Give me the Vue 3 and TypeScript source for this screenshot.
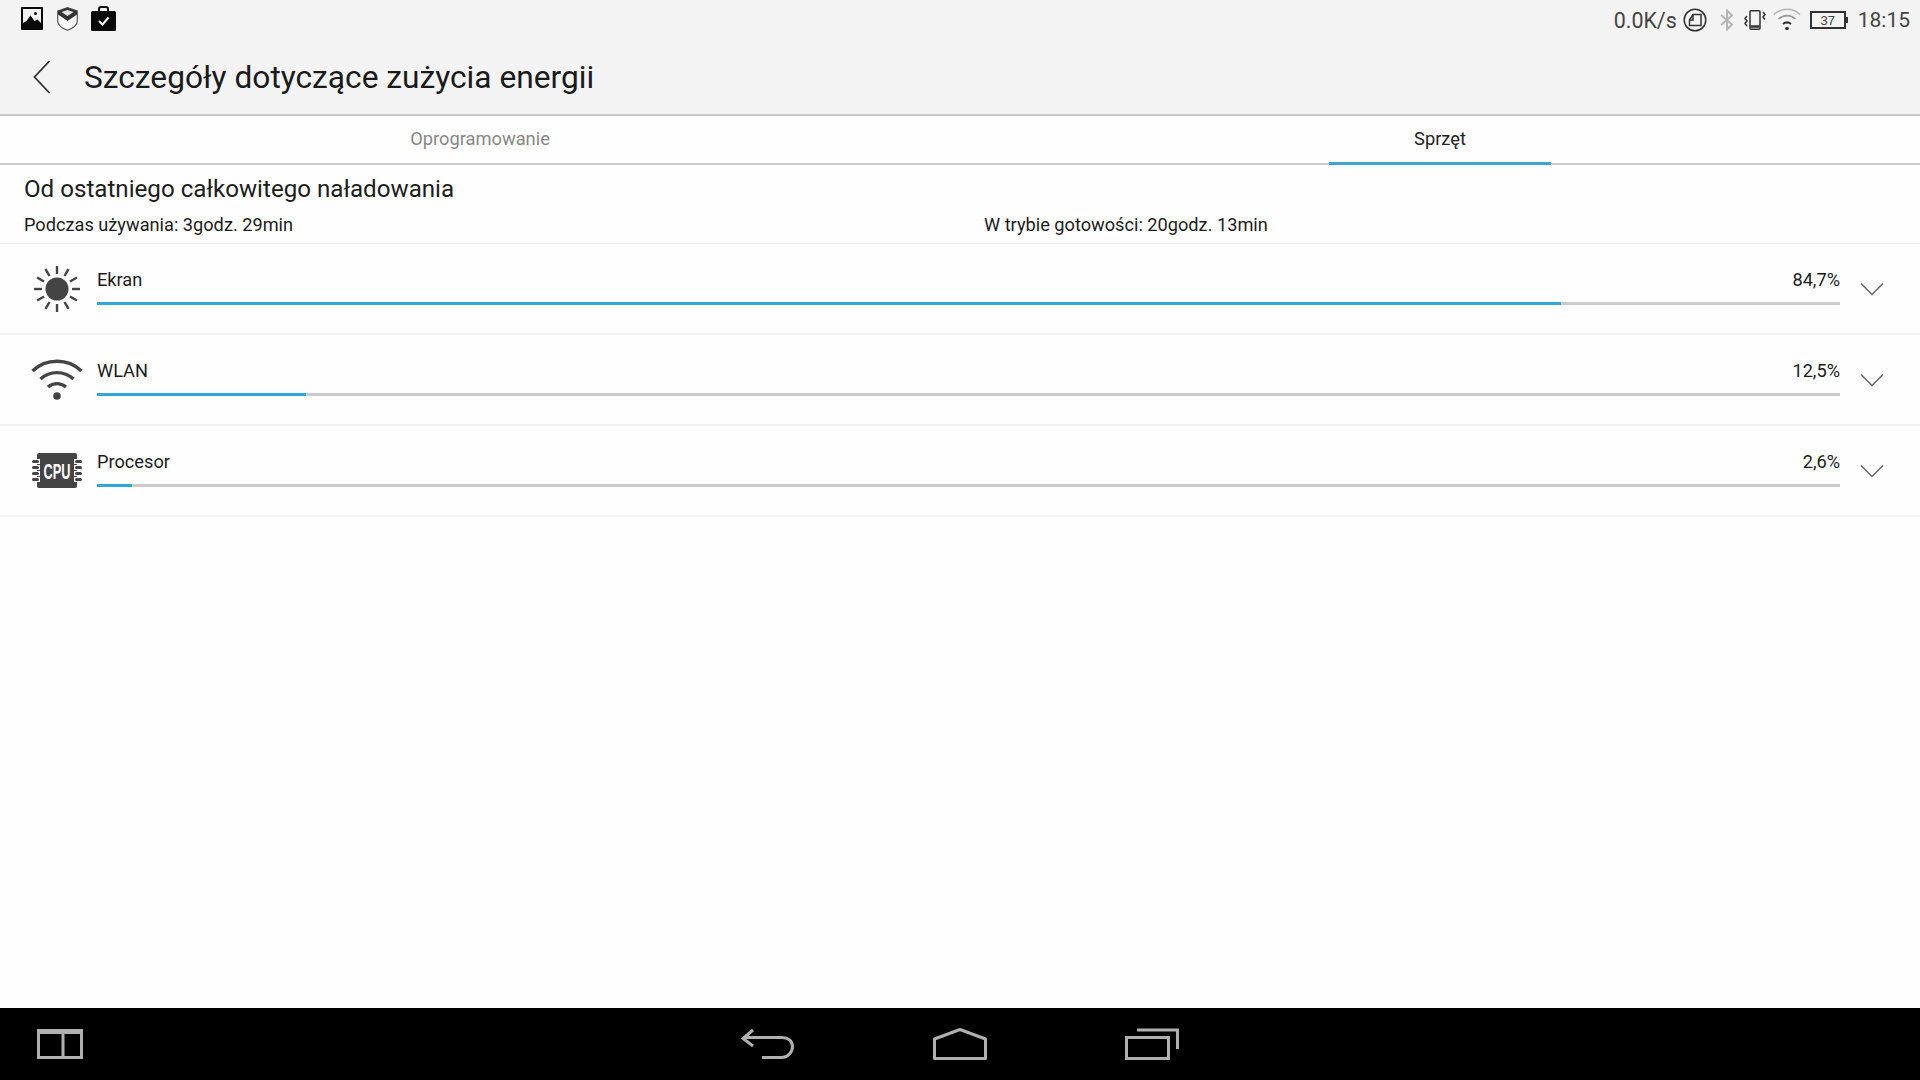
<script setup lang="ts">
interface UsageRow {
  id: 'sun' | 'wifi' | 'cpu'
  label: string
  value: string
  fill: number
}

const rows: UsageRow[] = [
  { id: 'sun', label: 'Ekran', value: '84,7%', fill: 84 },
  { id: 'wifi', label: 'WLAN', value: '12,5%', fill: 12 },
  { id: 'cpu', label: 'Procesor', value: '2,6%', fill: 2 },
]

const rays = [0, 30, 60, 90, 120, 150, 180, 210, 240, 270, 300, 330]
const pins = [7, 13, 19, 25]
</script>

<template>
  <div class="screen">
    <div class="top">
      <div class="status">
        <div class="notif">
          <svg width="22" height="23" viewBox="0 0 22 23">
            <rect width="22" height="23" rx="1" fill="#0a0a0a" />
            <path d="M2 2h18v14l-3.500-3.500-3 1.500-4-5.500-4 5.500L2 16z" fill="#f2f2f2" />
            <circle cx="14.500" cy="6.500" r="1.500" fill="#0a0a0a" />
          </svg>
          <svg class="shield" width="21" height="24" viewBox="0 0 21 24">
            <path d="M.7 4 10.500.7 20.300 4v10c0 4.500-5 7.500-9.800 9.300C5.700 21.500.7 18.500.7 14z" fill="#f8f8f8" stroke="#555" stroke-width="1.200" />
            <path d="M1 4 10.500.8 20 4v3.500L10.500 14 1 7.500z" fill="#333" />
            <path d="M4.500 5 10.500 3l6 2-6 4z" fill="#e4e4e4" />
          </svg>
          <svg width="25" height="25" viewBox="0 0 25 25">
            <path d="M8 6V3a2 2 0 0 1 2-2h5a2 2 0 0 1 2 2v3" fill="none" stroke="#0a0a0a" stroke-width="2" />
            <rect x="0" y="5" width="25" height="20" rx="1.500" fill="#0a0a0a" />
            <path d="M8 15 11.500 18.500 17.500 11.500" fill="none" stroke="#fff" stroke-width="2" />
          </svg>
        </div>
        <div class="tray">
          <span class="speed">0.0K/s</span>
          <svg class="data-ic" width="24" height="24" viewBox="0 0 24 24" fill="none" stroke="#333" stroke-width="1.500">
            <circle cx="12" cy="12" r="10.800" />
            <path d="M10 6.500h8v11H6.500V12L10 6.500z" />
            <path d="M10 6.500V12H6.500" />
          </svg>
          <svg class="bt-ic" width="14" height="22" viewBox="0 0 14 22" fill="none" stroke="#b4b4b4" stroke-width="2">
            <path d="M1 6l11 9.500L7 20.500V1.500L12 6.500 1 16" />
          </svg>
          <svg class="vib-ic" width="22" height="20" viewBox="0 0 22 20" fill="none" stroke="#333" stroke-width="1.500">
            <rect x="6" y=".8" width="10" height="18.400" rx="1" />
            <path d="M6.500 16.500h9" stroke-width="2.500" />
            <path d="M3 6 1 8.500 3 11 1 13.500 3 16" />
            <path d="M19 2l2 2.500L19 7l2 2.500" />
          </svg>
          <svg class="wifi-ic" width="28" height="24" viewBox="0 0 28 24" fill="none" stroke-width="1.600">
            <path d="M1 7.500C8.500.5 19.500.5 27 7.500" stroke="#b4b4b4" />
            <path d="M5.500 12C10.500 7.500 17.500 7.500 22.500 12" stroke="#999" />
            <path d="M10 17c2.500-2 5.500-2 8 0" stroke="#333" stroke-width="2" />
            <circle cx="14" cy="21.500" r="1.800" fill="#333" />
          </svg>
          <div class="battery"><span>37</span></div>
          <span class="clock">18:15</span>
        </div>
      </div>
      <div class="action">
        <svg class="back" width="18" height="34" viewBox="0 0 18 34" fill="none" stroke="#333" stroke-width="1.800">
          <path d="M16.500 1 1.500 17l15 16" />
        </svg>
        <span class="title">Szczegóły dotyczące zużycia energii</span>
      </div>
    </div>

    <div class="tabs">
      <div class="tab">Oprogramowanie</div>
      <div class="tab active"><span>Sprzęt</span></div>
    </div>

    <div class="summary">
      <h1>Od ostatniego całkowitego naładowania</h1>
      <div class="times">
        <span>Podczas używania: 3godz. 29min</span>
        <span>W trybie gotowości: 20godz. 13min</span>
      </div>
    </div>

    <div class="list">
      <div v-for="row in rows" :key="row.id" class="row">
        <div class="icon">
          <svg v-if="row.id === 'sun'" width="48" height="48" viewBox="0 0 48 48">
            <circle cx="24" cy="24" r="11.500" fill="#444" />
            <rect v-for="a in rays" :key="a" x="22.800" y="1" width="2.400" height="8" fill="#444" :transform="`rotate(${a} 24 24)`" />
          </svg>
          <svg v-else-if="row.id === 'wifi'" width="52" height="42" viewBox="0 0 52 42" fill="none" stroke="#444" stroke-width="3.400">
            <path d="M1.500 12C15-1 37-1 50.500 12" />
            <path d="M9.500 20c9.500-8.500 23.500-8.500 33 0" />
            <path d="M17 28c5.500-4.500 12.500-4.500 18 0" />
            <circle cx="26" cy="37" r="3.800" fill="#444" stroke="none" />
          </svg>
          <svg v-else width="50" height="35" viewBox="0 0 50 35">
            <rect x="5" y="0" width="40" height="35" rx="2" fill="#444" />
            <g v-for="y in pins" :key="y">
              <rect x="-1" :y="y - 1" width="9" height="5" fill="#fefefe" />
              <rect x="42" :y="y - 1" width="9" height="5" fill="#fefefe" />
              <rect x="0" :y="y" width="7" height="3" rx="1.500" fill="#444" />
              <rect x="43" :y="y" width="7" height="3" rx="1.500" fill="#444" />
            </g>
            <text transform="translate(25 26) scale(.58 1)" text-anchor="middle" class="cpu-text">CPU</text>
          </svg>
        </div>
        <div class="body">
          <div class="labels">
            <span>{{ row.label }}</span>
            <span>{{ row.value }}</span>
          </div>
          <div class="track">
            <div class="fill" :style="{ width: row.fill + '%' }"></div>
          </div>
        </div>
        <svg class="chev" width="24" height="14" viewBox="0 0 24 14" fill="none" stroke="#666" stroke-width="1.500">
          <path d="M1 1.500 12 12.500 23 1.500" />
        </svg>
      </div>
    </div>

    <div class="nav">
      <svg class="nav-split" width="46" height="30" viewBox="0 0 46 30" fill="none" stroke="#b0b0b0" stroke-width="3">
        <rect x="1.500" y="1.500" width="43" height="27" />
        <path d="M26 2v26" />
        <path d="M1 3.500h44" />
      </svg>
      <div class="nav-mid">
        <svg width="54" height="32" viewBox="0 0 54 32" fill="none" stroke="#b0b0b0" stroke-width="3">
          <path d="M12 2 2 10.500 12 18" />
          <path d="M2.500 9.500H41c6 0 10.500 3.500 10.500 9S47 29.500 41 29.500H21" />
        </svg>
        <svg width="54" height="32" viewBox="0 0 54 32" fill="none" stroke="#b0b0b0" stroke-width="3">
          <path d="M1.500 30.500V11L27 1.500 52.500 11v19.500z" stroke-linejoin="round" />
        </svg>
        <svg width="54" height="32" viewBox="0 0 54 32" fill="none" stroke="#b0b0b0" stroke-width="3">
          <rect x="1.500" y="9.500" width="42" height="21" />
          <path d="M12 2h40.500v19" />
        </svg>
      </div>
    </div>
  </div>
</template>

<style scoped>
.screen {
  width: 1920px;
  height: 1080px;
  display: flex;
  flex-direction: column;
  overflow: hidden;
  background: #fefefe;
  color: #1c1c1c;
  font-family: Roboto, "Noto Sans", sans-serif;
}

.top {
  height: 116px;
  flex: none;
  box-sizing: border-box;
  background: #f3f3f3;
  border-bottom: 2px solid #c8c8c8;
}

.status {
  height: 40px;
  display: flex;
  align-items: center;
  justify-content: space-between;
  padding: 0 10px 0 21px;
}

.notif {
  display: flex;
  align-items: center;
  gap: 13px;
  margin-top: -3px;
}

.shield {
  margin-left: 1px;
}

.tray {
  display: flex;
  align-items: center;
  color: #444;
}

.speed {
  font-size: 21.400px;
  margin-right: 6px;
}

.bt-ic {
  margin-left: 13px;
}

.vib-ic {
  margin-left: 10px;
}

.wifi-ic {
  margin-left: 7px;
  margin-top: -2px;
}

.battery {
  position: relative;
  width: 36px;
  height: 18px;
  box-sizing: border-box;
  margin-left: 9px;
  border: 2px solid #333;
  display: flex;
  align-items: center;
  justify-content: center;
  font-size: 13px;
  font-family: "Liberation Sans", sans-serif;
}

.battery::after {
  content: "";
  position: absolute;
  right: -4px;
  top: 4px;
  width: 2px;
  height: 6px;
  background: #333;
}

.clock {
  font-size: 21px;
  margin-left: 12px;
}

.action {
  height: 74px;
  display: flex;
  align-items: center;
  padding-left: 33px;
}

.back {
  flex: none;
}

.title {
  font-size: 31.700px;
  margin-left: 33px;
  color: #1a1a1a;
}

.tabs {
  height: 49px;
  flex: none;
  display: flex;
  border-bottom: 2px solid #cbcbcb;
  box-sizing: border-box;
}

.tab {
  width: 960px;
  display: flex;
  align-items: center;
  justify-content: center;
  padding-bottom: 3px;
  box-sizing: border-box;
  font-size: 18.300px;
  color: #888;
}

.tab.active {
  position: relative;
  color: #222;
}

.tab.active::after {
  content: "";
  position: absolute;
  left: 369px;
  width: 222px;
  bottom: -2px;
  height: 3px;
  background: #3ba3d8;
}

.summary {
  height: 79px;
  flex: none;
  box-sizing: border-box;
  padding: 9px 24px 0;
  border-bottom: 1px solid #efefef;
}

.summary h1 {
  margin: 0;
  font-size: 24.150px;
  font-weight: 400;
  line-height: 30px;
  color: #1c1c1c;
}

.times {
  margin-top: 10px;
  display: grid;
  grid-template-columns: 960px 1fr;
  font-size: 18.200px;
  line-height: 22px;
}

.list {
  flex: 1;
}

.row {
  height: 91px;
  box-sizing: border-box;
  display: flex;
  align-items: center;
  border-bottom: 2px solid #f2f2f2;
  padding-right: 36px;
}

.icon {
  width: 97px;
  flex: none;
  display: flex;
  justify-content: center;
  padding-left: 16px;
  box-sizing: border-box;
}

.body {
  flex: 1;
  min-width: 0;
  margin-top: -4px;
}

.labels {
  display: flex;
  justify-content: space-between;
  font-size: 18.200px;
  line-height: 24px;
  margin-bottom: 10px;
}

.track {
  height: 3px;
  background: #cacaca;
}

.fill {
  height: 100%;
  background: #2fa6dc;
}

.chev {
  flex: none;
  margin-left: 20px;
}

.cpu-text {
  font-family: "Liberation Sans", sans-serif;
  font-size: 22px;
  font-weight: 700;
  fill: #fff;
}

.nav {
  height: 72px;
  flex: none;
  background: #000;
  position: relative;
  display: flex;
  align-items: center;
  justify-content: center;
}

.nav-split {
  position: absolute;
  left: 37px;
  top: 21px;
}

.nav-mid {
  display: flex;
  gap: 138px;
}
</style>

<style>
html,
body {
  margin: 0;
  background: #fefefe;
}
</style>
